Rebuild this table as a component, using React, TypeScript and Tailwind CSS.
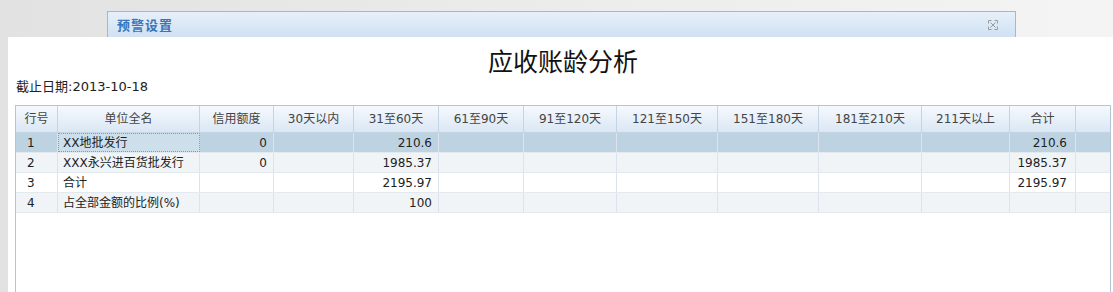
import React from 'react';

const cols = [
    { label: '行号', w: 42 },
    { label: '单位全名', w: 142 },
    { label: '信用额度', w: 74 },
    { label: '30天以内', w: 80 },
    { label: '31至60天', w: 85 },
    { label: '61至90天', w: 85 },
    { label: '91至120天', w: 93 },
    { label: '121至150天', w: 101 },
    { label: '151至180天', w: 101 },
    { label: '181至210天', w: 103 },
    { label: '211天以上', w: 88 },
    { label: '合计', w: 66 },
    { label: '', w: 35 },
];

const rows = [
    { no: '1', name: 'XX地批发行', credit: '0', d60: '210.6', total: '210.6' },
    { no: '2', name: 'XXX永兴进百货批发行', credit: '0', d60: '1985.37', total: '1985.37' },
    { no: '3', name: '合计', credit: '', d60: '2195.97', total: '2195.97' },
    { no: '4', name: '占全部金额的比例(%)', credit: '', d60: '100', total: '' },
];

const rowBg = ['bg-[#bed3e2]', 'bg-[#f0f4f7]', 'bg-white', 'bg-[#f0f4f7]'];

function CloseIcon() {
    return (
        <svg width="12" height="12" viewBox="0 0 12 12" fill="none" stroke="#9a9a9a" strokeWidth="1">
            <path d="M1.5 1.5h3M1.5 1.5v3M10.5 1.5h-3M10.5 1.5v3M1.5 10.5h3M1.5 10.5v-3M10.5 10.5h-3M10.5 10.5v-3" />
            <path d="M3.5 3.5l5 5M8.5 3.5l-5 5" />
        </svg>
    );
}

export default function App() {
    return (
        <div
            className="w-[1113px] h-[292px] overflow-hidden flex flex-col bg-gradient-to-r from-[#e2e2e2] via-[#ececec] to-[#f4f4f4]"
            style={{ fontFamily: '"DejaVu Sans", "Noto Sans CJK SC", sans-serif' }}
        >
            {/* dialog behind */}
            <div className="h-[37px] shrink-0 pl-[107px] pt-[11px]">
                <div className="w-[909px] h-[26px] border border-b-0 border-[#a9b6c4] bg-gradient-to-b from-[#e6f0fa] to-[#d0e1f3] flex items-center justify-between pl-[9px] pr-[16px]">
                    <span className="text-[13px] font-bold text-[#3a74b8] tracking-[1px]" style={{ fontFamily: '"Noto Sans CJK SC", sans-serif' }}>
                        预警设置
                    </span>
                    <CloseIcon />
                </div>
            </div>

            {/* report panel */}
            <div className="flex-1 ml-[8px] bg-white flex flex-col pt-[7px] pl-[7px] pr-[2px]">
                <h1
                    className="h-[32px] leading-[32px] text-center text-[25px] font-normal text-[#111]"
                    style={{ fontFamily: '"Noto Sans CJK SC", serif' }}
                >
                    应收账龄分析
                </h1>
                <div className="h-[20px] leading-[20px] pl-[1px] mt-[1px] text-[13px] text-[#222]">截止日期:2013-10-18</div>

                <div className="mt-[8px] flex-1 border-l border-r border-t border-[#b4c6d6] text-[12px] text-[#222]">
                    <div className="flex h-[27px] bg-gradient-to-b from-[#f5f9fd] to-[#dae7f4] border-b border-[#c3d4e4]">
                        {cols.map((c, i) => (
                            <div
                                key={i}
                                className={`flex items-center justify-center text-[#444] shrink-0 ${i < cols.length - 1 ? 'border-r border-[#c3d4e4]' : ''}`}
                                style={{ width: c.w }}
                            >
                                {c.label}
                            </div>
                        ))}
                    </div>

                    {rows.map((r, ri) => {
                        const cells = [r.no, r.name, r.credit, '', r.d60, '', '', '', '', '', '', r.total, ''];
                        return (
                            <div key={ri} className={`flex h-[20px] border-b border-[#e2e9ef] ${rowBg[ri]}`}>
                                {cells.map((v, ci) => {
                                    let align = 'justify-end pr-[6px]';
                                    if (ci === 0) align = 'justify-start pl-[11px]';
                                    if (ci === 1) align = 'justify-start pl-[5px]';
                                    if (ci === 11) align = 'justify-end pr-[8px]';
                                    const focus = ri === 0 && ci === 1;
                                    return (
                                        <div
                                            key={ci}
                                            className={`flex items-center shrink-0 whitespace-nowrap ${align} ${
                                                ci < cells.length - 1 ? 'border-r border-[#dbe4ec]' : ''
                                            } ${focus ? 'bg-[#cddfeb] outline outline-1 outline-dotted outline-[#7e9bb3] -outline-offset-1' : ''}`}
                                            style={{ width: cols[ci].w }}
                                        >
                                            {v}
                                        </div>
                                    );
                                })}
                            </div>
                        );
                    })}
                </div>
            </div>
        </div>
    );
}
